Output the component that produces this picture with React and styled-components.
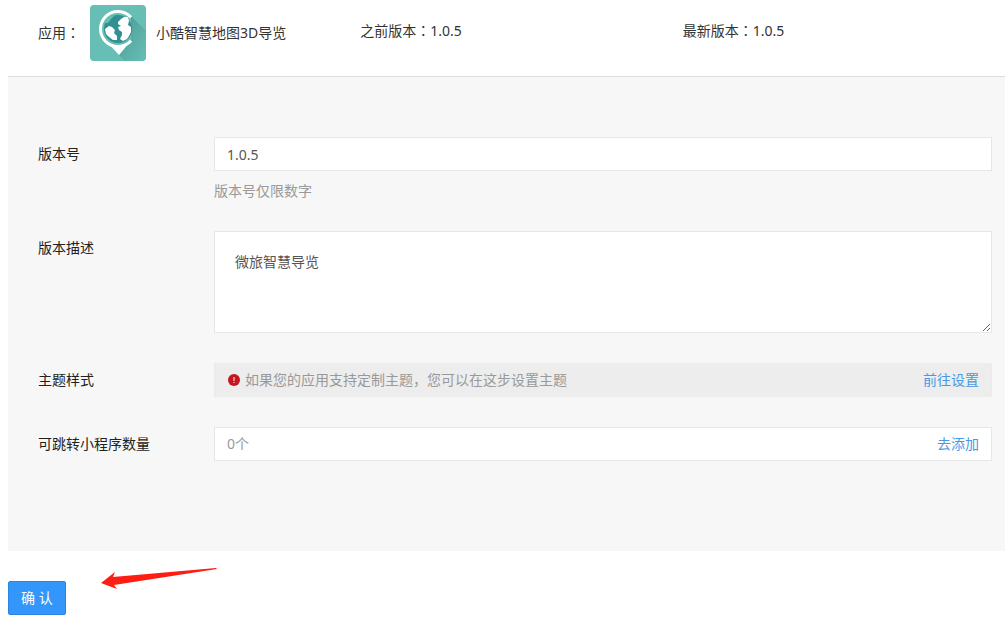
import { useState } from 'react';
import styled, { createGlobalStyle } from 'styled-components';

const GlobalStyle = createGlobalStyle`
  * {
    box-sizing: border-box;
  }

  body {
    margin: 0;
    background: #fff;
    color: #333;
    font-family: "Noto Sans", "Noto Sans CJK SC", sans-serif;
    font-size: 14px;
    line-height: 20px;
  }
`;

const Page = styled.main`
  padding-left: 8px;
`;

const Header = styled.header`
  display: grid;
  grid-template-columns: repeat(3, 1fr);
  padding: 5px 0 15px 30px;
  border-bottom: 1px solid #ddd;
`;

const HeaderItem = styled.div`
  display: flex;
  align-items: center;
  height: 56px;
  padding-bottom: ${({ $raised }) => ($raised ? '4px' : '0')};
`;

// full-width colon, centred in its box
const Colon = styled.span`
  font-family: "Noto Sans CJK TC", sans-serif;
  line-height: 1;
`;

const AppIcon = styled.svg`
  flex: none;
  width: 56px;
  height: 56px;
  margin: 0 10px;
`;

const Form = styled.form`
  margin: 0;
`;

const Panel = styled.div`
  display: flex;
  flex-direction: column;
  gap: 30px;
  padding: 60px 13px 90px 30px;
  background: #f7f7f7;
`;

const Row = styled.div`
  display: flex;
  align-items: flex-start;
`;

const Label = styled.label`
  flex: 0 0 176px;
  line-height: 34px;
  color: #222;
`;

const Field = styled.div`
  flex: 1;
  min-width: 0;
`;

const Input = styled.input`
  display: block;
  width: 100%;
  height: 34px;
  padding: 0 12px;
  border: 1px solid #e7e7e7;
  border-radius: 0;
  background: #fff;
  color: #555;
  font: inherit;
  outline: none;
`;

const TextArea = styled.textarea`
  display: block;
  width: 100%;
  height: 102px;
  padding: 20px;
  border: 1px solid #e7e7e7;
  border-radius: 0;
  background: #fff;
  color: #555;
  font: inherit;
  resize: vertical;
  outline: none;
`;

const Hint = styled.p`
  margin: 10px 0 0;
  color: #999;
`;

const Bar = styled.div`
  display: flex;
  align-items: center;
  justify-content: space-between;
  height: 34px;
  padding: 0 12px;
  border: 1px solid ${({ $muted }) => ($muted ? '#ebebeb' : '#e7e7e7')};
  background: ${({ $muted }) => ($muted ? '#ededed' : '#fff')};
  color: #999;
`;

const Notice = styled.span`
  display: flex;
  align-items: center;
  gap: 4px;
`;

const WarnIcon = styled.svg`
  width: 14px;
  height: 14px;
`;

const Link = styled.a`
  color: #4a98e3;
  text-decoration: none;

  &:hover {
    text-decoration: underline;
  }
`;

const Footer = styled.footer`
  display: flex;
  align-items: flex-end;
  gap: 34px;
  padding: 14px 0 18px;
`;

const SubmitButton = styled.button`
  height: 34px;
  padding: 0 12px;
  border: 1px solid #2a85e0;
  border-radius: 2px;
  background: #3296fa;
  color: #fff;
  font: inherit;
  cursor: pointer;

  &:hover {
    background: #2a8bee;
  }
`;

const Arrow = styled.svg`
  width: 118px;
  height: 50px;
`;

const GlobeIcon = () => (
  <AppIcon viewBox="0 0 56 56" aria-hidden="true">
    <defs>
      <linearGradient id="shade" x1="0" y1="0" x2="1" y2="1">
        <stop offset="0.2" stopColor="#4fa199" />
        <stop offset="0.9" stopColor="#65bcb2" />
      </linearGradient>
      <clipPath id="tile">
        <rect width="56" height="56" rx="4" />
      </clipPath>
    </defs>
    <g clipPath="url(#tile)">
      <rect width="56" height="56" fill="#67beb4" />
      <path d="M41 11 56 26V56H35L29 50 41 36Z" fill="url(#shade)" />
      <circle cx="28" cy="24" r="14" fill="#329092" />
      <path
        d="M41 12.300A17.500 17.500 0 1 0 41 35.700"
        fill="none"
        stroke="#fff"
        strokeWidth="3"
      />
      <path d="M16 36Q27 45 39 38L29 50Z" fill="#fff" />
      <path
        d="M31 14 34 12 38 12 39 16 38 20 41 22 41 27 39 31 37 34 33 36 30 34 32 30 32 27 29 25 28 22 31 21 28 19 28 17Z"
        fill="#fff"
      />
      <path d="M15 24 19 21 22 22 25 25 24 28 27 31 27 35 23 35 19 32 16 29Z" fill="#fff" />
      <path d="M15 18Q18 11 25 10L21 14 18 18Z" fill="#67beb4" />
    </g>
  </AppIcon>
);

const App = () => {
  const [version, setVersion] = useState('1.0.5');
  const [description, setDescription] = useState('微旅智慧导览');

  const handleSubmit = (event) => {
    event.preventDefault();
  };

  return (
    <>
      <GlobalStyle />
      <Page>
        <Header>
          <HeaderItem>
            <span>应用<Colon>：</Colon></span>
            <GlobeIcon />
            <span>小酷智慧地图3D导览</span>
          </HeaderItem>
          <HeaderItem $raised>
            <span>之前版本<Colon>：</Colon>1.0.5</span>
          </HeaderItem>
          <HeaderItem $raised>
            <span>最新版本<Colon>：</Colon>1.0.5</span>
          </HeaderItem>
        </Header>
        <Form onSubmit={handleSubmit}>
          <Panel>
            <Row>
              <Label htmlFor="version">版本号</Label>
              <Field>
                <Input
                  id="version"
                  type="text"
                  value={version}
                  onChange={(event) => setVersion(event.target.value)}
                />
                <Hint>版本号仅限数字</Hint>
              </Field>
            </Row>
            <Row>
              <Label htmlFor="description">版本描述</Label>
              <Field>
                <TextArea
                  id="description"
                  value={description}
                  onChange={(event) => setDescription(event.target.value)}
                />
              </Field>
            </Row>
            <Row>
              <Label as="span">主题样式</Label>
              <Field>
                <Bar $muted>
                  <Notice>
                    <WarnIcon viewBox="0 0 14 14" aria-hidden="true">
                      <circle cx="7" cy="7" r="6" fill="#c9151e" />
                      <path d="M6.500 4H7.500V8H6.500ZM6.500 9H7.500V10H6.500Z" fill="#fff" />
                    </WarnIcon>
                    <span>如果您的应用支持定制主题，您可以在这步设置主题</span>
                  </Notice>
                  <Link href="#theme">前往设置</Link>
                </Bar>
              </Field>
            </Row>
            <Row>
              <Label as="span">可跳转小程序数量</Label>
              <Field>
                <Bar>
                  <span>0个</span>
                  <Link href="#programs">去添加</Link>
                </Bar>
              </Field>
            </Row>
          </Panel>
          <Footer>
            <SubmitButton type="submit">确 认</SubmitButton>
            <Arrow viewBox="0 0 118 50" aria-hidden="true">
              <path d="M1 18 15 7 13 12 116 3 117 4 14 20 17 24Z" fill="#fd1d12" />
            </Arrow>
          </Footer>
        </Form>
      </Page>
    </>
  );
};

export default App;
